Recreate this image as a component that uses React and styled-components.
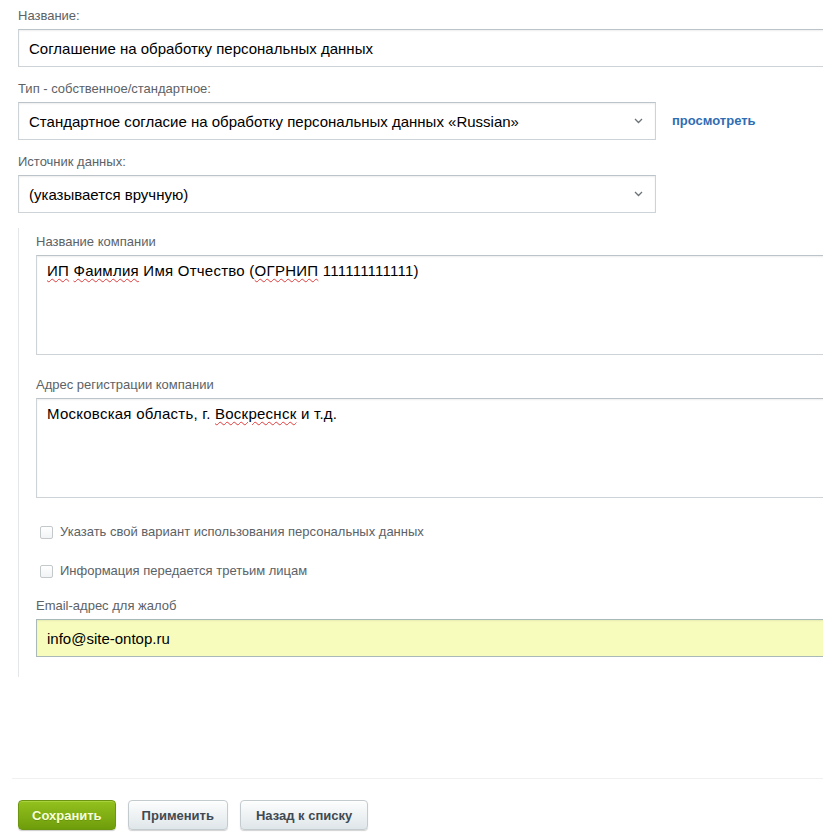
import React from 'react';
import styled, { createGlobalStyle } from 'styled-components';

const GlobalStyle = createGlobalStyle`
  html, body {
    margin: 0;
    padding: 0;
    background: #fff;
  }
  body {
    font-family: "Liberation Sans", Arial, sans-serif;
    overflow: hidden;
  }
`;

const Page = styled.div`
  width: 823px;
  height: 839px;
  overflow: hidden;
  padding: 8px 0 0 18px;
  box-sizing: border-box;
`;

const Field = styled.div`
  margin-bottom: ${(p) => p.$mb ?? 14}px;
`;

const Label = styled.div`
  font-size: 13px;
  line-height: 16px;
  color: #5c6266;
  margin-bottom: 5px;
`;

const Row = styled.div`
  display: flex;
  align-items: center;
  gap: 16px;
`;

const TextInput = styled.div`
  box-sizing: border-box;
  height: 38px;
  width: ${(p) => p.$width || '840px'};
  border: 1px solid #cdd3d7;
  border-top-color: #bcc4c9;
  box-shadow: inset 0 1px 2px rgba(0, 0, 0, 0.07);
  background: ${(p) => (p.$highlight ? '#f7fcbd' : '#fff')};
  ${(p) => p.$highlight && 'border-color: #a9b9b7;'}
  padding: 0 10px;
  display: flex;
  align-items: center;
  font-size: 15px;
  color: #000;
  white-space: nowrap;
`;

const Select = styled(TextInput)`
  width: 638px;
  justify-content: space-between;
  padding-right: 12px;
`;

const Chevron = () => (
  <svg width="9" height="6" viewBox="0 0 9 6">
    <path d="M1 1l3.5 3.5L8 1" fill="none" stroke="#6b7378" strokeWidth="1.3" />
  </svg>
);

const ViewLink = styled.a`
  font-size: 13px;
  font-weight: bold;
  color: #2f6db3;
  text-decoration: none;
  margin-top: -2px;
`;

const Group = styled.div`
  margin-top: 15px;
  border-left: 1px solid #e3e7e9;
  padding: 6px 0 20px 17px;
`;

const TextArea = styled.div`
  box-sizing: border-box;
  height: 100px;
  width: 820px;
  border: 1px solid #cdd3d7;
  border-top-color: #bcc4c9;
  box-shadow: inset 0 1px 2px rgba(0, 0, 0, 0.07);
  padding: 6px 10px;
  font-size: 15px;
  line-height: 18px;
  letter-spacing: 0.25px;
  color: #000;
`;

const Misspelled = styled.span`
  text-decoration: underline wavy #e23a3a;
  text-decoration-thickness: 1px;
  text-underline-offset: 2px;
`;

const CheckRow = styled.label`
  display: flex;
  align-items: center;
  gap: 7px;
  padding-left: 4px;
  font-size: 13px;
  line-height: 16px;
  color: #5c6266;
  margin-bottom: ${(p) => p.$mb}px;
`;

const Box = styled.span`
  width: 11px;
  height: 11px;
  border: 1px solid #c3c8cb;
  border-radius: 2px;
  background: linear-gradient(#fff, #f1f3f4);
`;

const Divider = styled.div`
  margin: 101px 0 0 -6px;
  height: 1px;
  background: #eef0f1;
`;

const Buttons = styled.div`
  display: flex;
  gap: 12px;
  margin-top: 21px;
`;

const Button = styled.button`
  box-sizing: border-box;
  height: 30px;
  padding: 0 ${(p) => p.$px}px;
  font-family: "Liberation Sans", Arial, sans-serif;
  font-size: 13px;
  font-weight: bold;
  border-radius: 4px;
  cursor: pointer;
  color: #3f4a52;
  border: 1px solid #c4cbcf;
  background: linear-gradient(#fdfefe, #dfe6e9);
  box-shadow: 0 1px 1px rgba(0, 0, 0, 0.18), inset 0 1px 0 #fff;
  &.primary {
    color: #f6ffd8;
    border-color: #6c9510;
    background: linear-gradient(#93c11e, #6e9d0b);
    box-shadow: 0 1px 1px rgba(0, 0, 0, 0.2), inset 0 1px 0 #a9d23e;
    text-shadow: 0 1px 0 rgba(0, 0, 0, 0.15);
  }
`;

export default function App() {
  return (
    <>
      <GlobalStyle />
      <Page>
        <Field>
          <Label>Название:</Label>
          <TextInput>Соглашение на обработку персональных данных</TextInput>
        </Field>
        <Field>
          <Label>Тип - собственное/стандартное:</Label>
          <Row>
            <Select>
              <span>Стандартное согласие на обработку персональных данных «Russian»</span>
              <Chevron />
            </Select>
            <ViewLink href="#">просмотреть</ViewLink>
          </Row>
        </Field>
        <Field $mb={0}>
          <Label>Источник данных:</Label>
          <Select>
            <span>(указывается вручную)</span>
            <Chevron />
          </Select>
        </Field>

        <Group>
          <Field $mb={22}>
            <Label>Название компании</Label>
            <TextArea>
              <Misspelled>ИП</Misspelled> <Misspelled>Фаимлия</Misspelled> Имя Отчество (
              <Misspelled>ОГРНИП</Misspelled> 111111111111)
            </TextArea>
          </Field>
          <Field $mb={26}>
            <Label>Адрес регистрации компании</Label>
            <TextArea>
              Московская область, г. <Misspelled>Воскреснск</Misspelled> и т.д.
            </TextArea>
          </Field>
          <CheckRow $mb={23}>
            <Box />
            Указать свой вариант использования персональных данных
          </CheckRow>
          <CheckRow $mb={19}>
            <Box />
            Информация передается третьим лицам
          </CheckRow>
          <Field $mb={0}>
            <Label>Email-адрес для жалоб</Label>
            <TextInput $highlight $width="820px">info@site-ontop.ru</TextInput>
          </Field>
        </Group>

        <Divider />
        <Buttons>
          <Button className="primary" $px={13}>Сохранить</Button>
          <Button $px={13}>Применить</Button>
          <Button $px={15}>Назад к списку</Button>
        </Buttons>
      </Page>
    </>
  );
}
